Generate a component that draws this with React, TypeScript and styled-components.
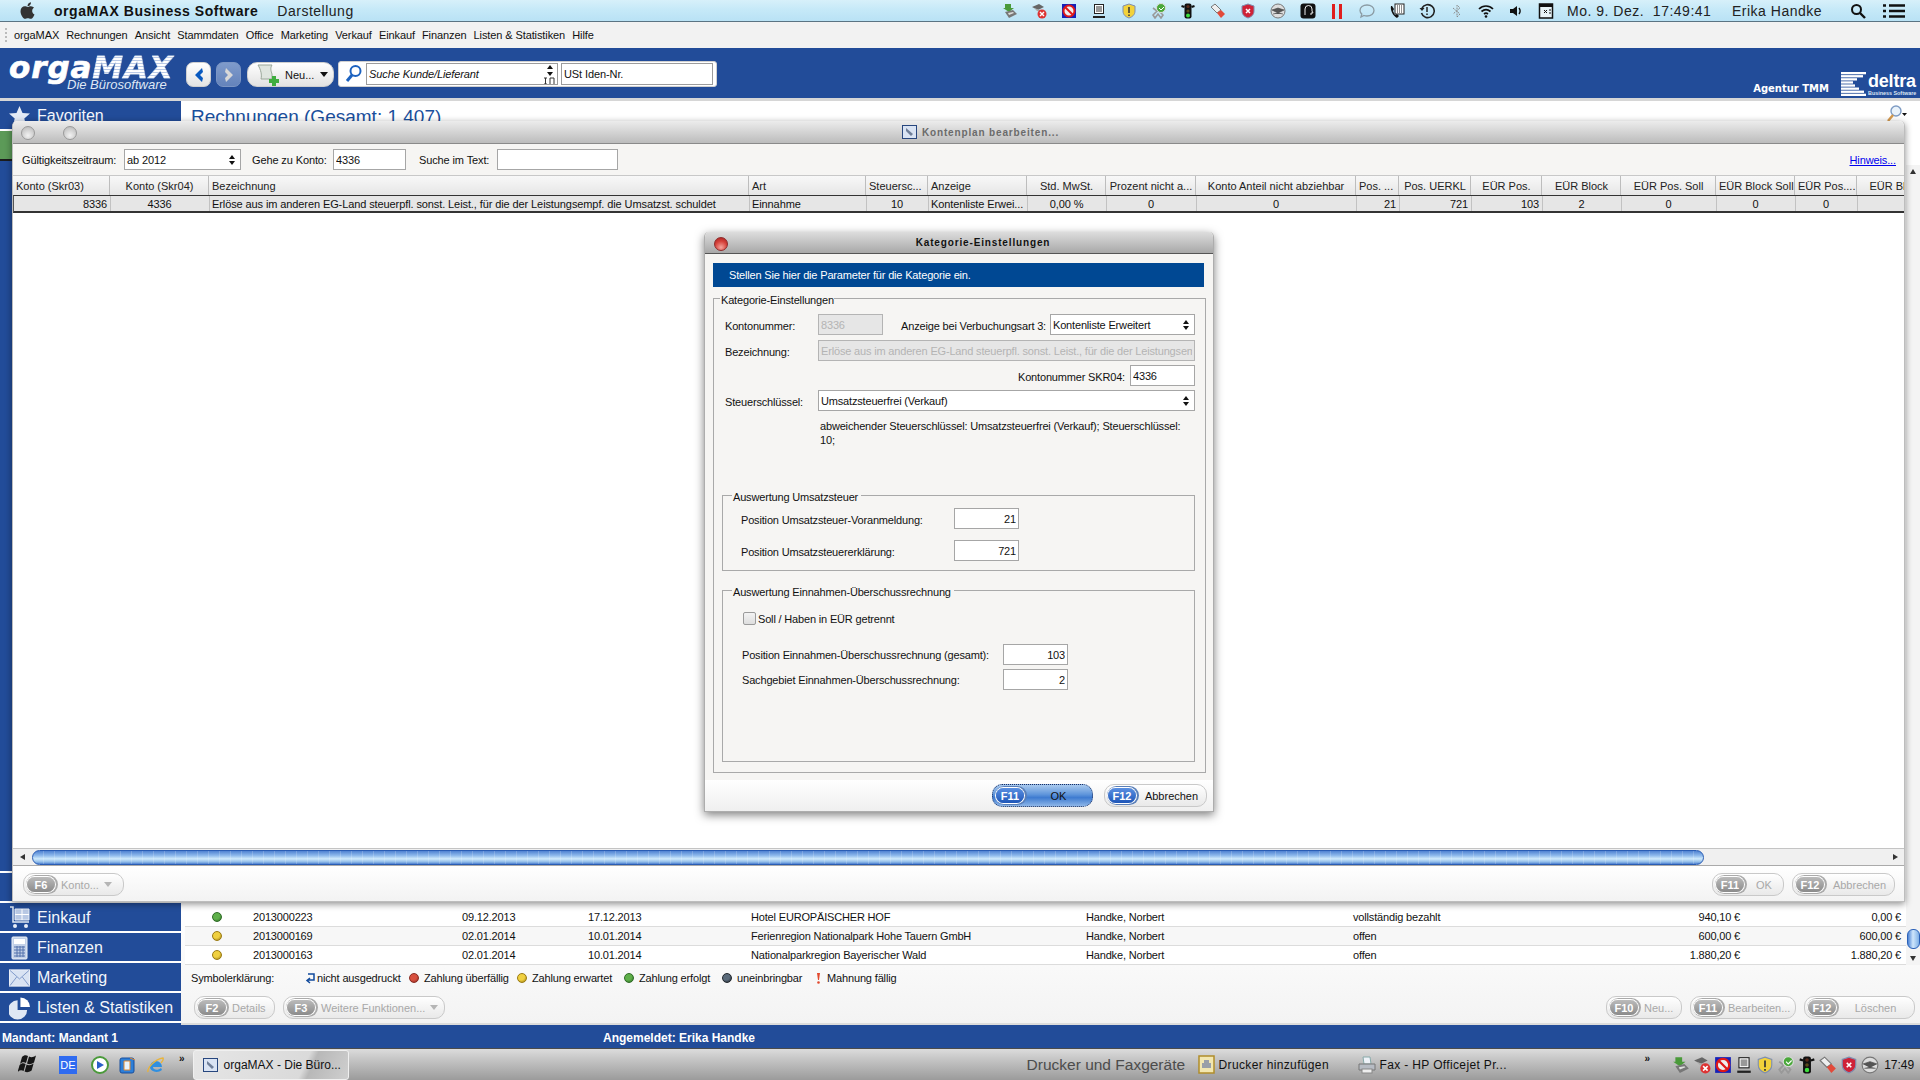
import React from "react";
import styled, { createGlobalStyle } from "styled-components";
import { FaApple } from "react-icons/fa";

const UI = `"Liberation Sans", Arial, sans-serif`;
const BLUE = "#224c99";

const Global = createGlobalStyle`
  html, body { margin: 0; padding: 0; background: #fff; }
  #root { width: 1920px; height: 1080px; }
  * { box-sizing: border-box; }
`;

const Page = styled.div`
  position: relative;
  width: 1920px;
  height: 1080px;
  overflow: hidden;
  display: flex;
  flex-direction: column;
  font: 11px ${UI};
  color: #111;
`;

/* ---------- mac menu bar ---------- */
const MacBar = styled.div`
  height: 22px;
  flex: none;
  display: flex;
  align-items: center;
  padding: 0 4px 0 18px;
  background: linear-gradient(#d7f0fa, #c6e9f8 45%, #b9e2f5);
  border-bottom: 1px solid #5b7483;
  color: #222;
  font: 14px ${UI};
  letter-spacing: 0.5px;
  white-space: nowrap;
`;
const AppName = styled.span`
  margin-left: 17px;
  font-weight: 700;
  letter-spacing: 0.55px;
  color: #111;
`;
const MacMenu = styled.span`
  margin-left: 19px;
`;
const TrayRow = styled.div<{ $gap: number }>`
  display: flex;
  align-items: center;
  gap: ${(p) => p.$gap}px;
`;
const MacTray = styled(TrayRow)`
  margin-left: auto;
`;
const MacClock = styled.span`
  margin-left: 13px;
  width: 165px;
  white-space: pre;
`;
const MacUser = styled.span`
  width: 118px;
`;
const MacTool = styled.span`
  width: 33px;
  display: flex;
  align-items: center;
`;

/* ---------- application menu ---------- */
const AppMenu = styled.div`
  height: 26px;
  flex: none;
  display: flex;
  align-items: center;
  gap: 7.1px;
  padding-left: 14px;
  background: #f2f2f2;
  position: relative;
  letter-spacing: -0.1px;
  &::before {
    content: "";
    position: absolute;
    left: 5px;
    top: 6px;
    bottom: 6px;
    border-left: 2px dotted #bbb;
  }
`;
const MenuItem = styled.span`
  white-space: nowrap;
`;

/* ---------- blue header ---------- */
const Header = styled.div`
  height: 50px;
  flex: none;
  display: flex;
  background: ${BLUE};
  padding-left: 9px;
  color: #fff;
`;
const Logo = styled.div`
  width: 177px;
  padding-top: 7px;
  flex: none;
`;
const LogoWord = styled.div`
  font: italic 700 31px/24px "DejaVu Sans", sans-serif;
  letter-spacing: 0.9px;
  -webkit-text-stroke: 0.7px #fff;
  white-space: nowrap;
  color: #fff;
`;
const LogoMax = styled.span`
  background: repeating-linear-gradient(#fff 0 2px, #b9c9e6 2px 3px);
  -webkit-background-clip: text;
  background-clip: text;
  color: transparent;
  -webkit-text-stroke: 0.3px #dfe7f5;
`;
const LogoSub = styled.div`
  font: italic 13px/12px ${UI};
  color: #dfe7f5;
  margin-left: 58px;
`;
const NavButton = styled.div<{ $dim?: boolean }>`
  width: 25px;
  height: 25px;
  margin-top: 14px;
  margin-right: 5px;
  flex: none;
  border-radius: 7px;
  display: flex;
  align-items: center;
  justify-content: center;
  background: ${(p) =>
    p.$dim ? "linear-gradient(#7f9bcb,#6483bb)" : "linear-gradient(#fff,#e4e4e4)"};
  border: 1px solid ${(p) => (p.$dim ? "#7b95c4" : "#d0d0d0")};
`;
const NewButton = styled.div`
  width: 87px;
  height: 25px;
  margin: 14px 4px 0 1px;
  flex: none;
  display: flex;
  align-items: center;
  border-radius: 10px;
  background: linear-gradient(#fff, #e2e2e2);
  border: 1px solid #cfcfcf;
  color: #111;
  padding-left: 5px;
`;
const NewLabel = styled.span`
  margin-left: 6px;
  margin-right: 6px;
`;
const Caret = styled.span<{ $color?: string }>`
  width: 0;
  height: 0;
  flex: none;
  border-left: 4px solid transparent;
  border-right: 4px solid transparent;
  border-top: 5px solid ${(p) => p.$color ?? "#111"};
`;
const SearchBox = styled.div`
  width: 379px;
  height: 26px;
  margin-top: 13px;
  flex: none;
  display: flex;
  align-items: center;
  gap: 3px;
  background: #fff;
  border: 1px solid #d0d0d0;
  border-radius: 3px;
  padding-left: 6px;
  color: #111;
`;
const SearchField = styled.div<{ $w: number; $italic?: boolean }>`
  width: ${(p) => p.$w}px;
  height: 22px;
  flex: none;
  border: 1px solid #9c9c9c;
  display: flex;
  align-items: center;
  justify-content: space-between;
  padding: 0 0 0 2px;
  font-style: ${(p) => (p.$italic ? "italic" : "normal")};
  letter-spacing: -0.1px;
  white-space: nowrap;
`;
const HeaderRight = styled.div`
  margin-left: auto;
  display: flex;
  align-items: flex-end;
  padding-right: 4px;
  padding-bottom: 1px;
`;
const Agentur = styled.span`
  font: 700 10px/14px "DejaVu Sans", sans-serif;
  margin-right: 12px;
  margin-bottom: 1px;
`;
const DeltraText = styled.div`
  margin-left: 2px;
  width: 48px;
`;
const DeltraWord = styled.div`
  font: 700 18px/18px ${UI};
  letter-spacing: -0.2px;
`;
const DeltraSub = styled.div`
  font: 700 5.4px/7px ${UI};
  white-space: nowrap;
  color: #dde5f3;
`;
const GrayRule = styled.div`
  height: 3px;
  flex: none;
  background: #d6d6d6;
`;

/* ---------- body ---------- */
const Body = styled.div`
  flex: 1;
  min-height: 0;
  display: flex;
`;
const Sidebar = styled.div`
  width: 181px;
  flex: none;
  display: flex;
  flex-direction: column;
  background: ${BLUE};
  color: #f4f7fc;
  padding-bottom: 2px;
`;
const SideItem = styled.div<{ $active?: boolean }>`
  height: 30px;
  flex: none;
  display: flex;
  align-items: center;
  gap: 7px;
  padding: 2px 0 0 9px;
  font-size: 16px;
  white-space: nowrap;
  background: ${(p) => (p.$active ? "#5c9a58" : "transparent")};
  border-bottom: 2px solid ${(p) => (p.$active ? "#1c1c1c" : "#fff")};
`;
const SideSpacer = styled.div`
  flex: 1;
`;
const Main = styled.div`
  flex: 1;
  min-width: 0;
  display: flex;
  flex-direction: column;
  background: linear-gradient(#fff 88%, #f3f3f3);
  border-bottom: 2px solid #dcdcdc;
`;
const MainTop = styled.div`
  flex: 1;
  min-height: 0;
  display: flex;
`;
const MainColumn = styled.div`
  flex: 1;
  min-width: 0;
  display: flex;
  flex-direction: column;
  padding-left: 4px;
`;
const TitleRow = styled.div`
  display: flex;
  justify-content: space-between;
  padding: 4px 0 0 6px;
  margin-right: -3px;
`;
const Title = styled.div`
  font-size: 19px;
  line-height: 24px;
  color: #1a4f9c;
`;
const ListGrid = styled.div`
  margin-top: auto;
`;
const ListRow = styled.div<{ $alt?: boolean }>`
  height: 19px;
  display: grid;
  grid-template-columns: 68px 209px 126px 163px 335px 267px 387px 165px;
  align-items: center;
  letter-spacing: -0.17px;
  background: ${(p) => (p.$alt ? "#f7f7f7" : "#fff")};
  border-bottom: 1px solid #dcdcdc;
`;
const ListCell = styled.span<{ $right?: boolean; $end?: boolean }>`
  white-space: nowrap;
  text-align: ${(p) => (p.$right ? "right" : "left")};
  padding-right: ${(p) => (p.$end ? 4 : 0)}px;
`;
const SplitCell = styled.span`
  display: flex;
  justify-content: space-between;
  white-space: nowrap;
`;
const DotCell = styled.span`
  padding-left: 27px;
  display: flex;
  align-items: center;
`;
const Dot = styled.span<{ $c: string; $d: string }>`
  display: inline-block;
  width: 10px;
  height: 10px;
  flex: none;
  border-radius: 50%;
  background: radial-gradient(circle at 40% 35%, ${(p) => p.$c} 45%, ${(p) => p.$d});
  border: 1px solid ${(p) => p.$d};
`;
const VScroll = styled.div`
  width: 14px;
  flex: none;
  margin: 64px 0 0;
  display: flex;
  flex-direction: column;
  background: #f4f4f4;
  align-items: center;
`;
const VArrow = styled.span<{ $up?: boolean }>`
  margin: 4px 0;
  width: 0;
  height: 0;
  border-left: 3px solid transparent;
  border-right: 3px solid transparent;
  ${(p) => (p.$up ? "border-bottom: 5px solid #333;" : "border-top: 5px solid #333;")}
`;
const VThumb = styled.div`
  margin-top: auto;
  margin-bottom: 3px;
  width: 13px;
  height: 20px;
  border-radius: 6px;
  border: 1px solid #2b61b8;
  background: linear-gradient(90deg, #4b82d4, #cfe6fb 45%, #7fb0e6);
`;
const LegendRow = styled.div`
  height: 25px;
  flex: none;
  display: flex;
  align-items: center;
  padding: 1px 0 0 10px;
  letter-spacing: -0.15px;
`;
const LegendHead = styled.span`
  width: 114px;
  white-space: nowrap;
`;
const LegendItem = styled.span<{ $w: number; $gap?: number }>`
  width: ${(p) => p.$w}px;
  flex: none;
  display: flex;
  align-items: center;
  gap: ${(p) => p.$gap ?? 5}px;
  white-space: nowrap;
`;
const ActionRow = styled.div`
  height: 33px;
  flex: none;
  display: flex;
  justify-content: space-between;
  padding: 6px 5px 0 13px;
`;
const ButtonGroup = styled.div`
  display: flex;
  gap: 8px;
`;

/* ---------- pill buttons ---------- */
const Pill = styled.div<{ $w: number; $primary?: boolean; $on?: boolean }>`
  width: ${(p) => p.$w}px;
  height: 23px;
  flex: none;
  display: flex;
  align-items: center;
  padding: 0 5px 0 3px;
  border-radius: 10px;
  white-space: nowrap;
  letter-spacing: 0;
  color: ${(p) => (p.$on || p.$primary ? "#111" : "#a8a8a8")};
  border: 1px ${(p) => (p.$primary ? "dotted #1c2f60" : "solid #c9c9c9")};
  background: ${(p) =>
    p.$primary
      ? "linear-gradient(#a9c9ee, #5f95db 45%, #3e7bd0 60%, #8db6e8)"
      : "linear-gradient(#fff, #f1f1f1 60%, #e9e9e9)"};
`;
const KeyBadge = styled.span<{ $on?: boolean }>`
  flex: none;
  min-width: 28px;
  height: 15px;
  padding: 0 3px;
  display: flex;
  align-items: center;
  justify-content: center;
  border-radius: 8px;
  font-weight: 700;
  font-size: 11px;
  color: #fff;
  background: ${(p) =>
    p.$on ? "linear-gradient(#5b90e2,#1e56b8)" : "linear-gradient(#bbb,#8b8b8b)"};
  box-shadow: 0 0 0 1px #fff, 1px 0 0 2px ${(p) => (p.$on ? "#5a7fb8" : "#aaa")};
`;
const PillLabel = styled.span<{ $center?: boolean }>`
  flex: 1;
  margin-left: 6px;
  display: flex;
  align-items: center;
  justify-content: ${(p) => (p.$center ? "center" : "flex-start")};
  gap: 5px;
`;

/* ---------- windows ---------- */
const ListWindow = styled.div`
  position: absolute;
  left: 12px;
  top: 121px;
  width: 1893px;
  height: 781px;
  display: flex;
  flex-direction: column;
  background: #fff;
  border: 1px solid #bdbdbd;
  border-top: 0;
  border-radius: 5px 5px 0 0;
  box-shadow: 0 2px 7px rgba(0, 0, 0, 0.45);
`;
const WinTitle = styled.div<{ $offset: number }>`
  height: 23px;
  flex: none;
  position: relative;
  display: flex;
  align-items: center;
  justify-content: center;
  gap: 5px;
  padding-left: ${(p) => p.$offset}px;
  border-radius: 5px 5px 0 0;
  background: linear-gradient(#ececec, #bcbcbc);
  border-bottom: 1px solid #8a8a8a;
  font: 700 10px ${UI};
  letter-spacing: 0.85px;
  color: #6b6b6b;
`;
const Lights = styled.div`
  position: absolute;
  left: 8px;
  top: 5px;
  display: flex;
  gap: 28px;
`;
const GreyLight = styled.span`
  width: 14px;
  height: 14px;
  border-radius: 50%;
  border: 1px solid #9a9a9a;
  background: radial-gradient(circle at 50% 70%, #f2f2f2, #b4b4b4);
`;
const Toolbar = styled.div`
  height: 31px;
  flex: none;
  display: flex;
  align-items: center;
  padding: 0 8px 0 9px;
  background: #f6f5f3;
  letter-spacing: -0.12px;
`;
const ToolLabel = styled.span<{ $w: number; $ml?: number }>`
  width: ${(p) => p.$w}px;
  margin-left: ${(p) => p.$ml ?? 0}px;
  flex: none;
  white-space: nowrap;
`;
const Field = styled.input<{ $w: number; $right?: boolean; $off?: boolean; $ml?: number }>`
  width: ${(p) => p.$w}px;
  height: 21px;
  flex: none;
  padding: 0 2px;
  margin: 0 0 0 ${(p) => p.$ml ?? 0}px;
  outline: none;
  font: 11px ${UI};
  letter-spacing: inherit;
  border: 1px solid ${(p) => (p.$off ? "#b4b4b4" : "#a6a6a6")};
  border-radius: 0;
  text-align: ${(p) => (p.$right ? "right" : "left")};
  color: ${(p) => (p.$off ? "#b4b4b4" : "#111")};
  background: ${(p) => (p.$off ? "#e6e6e6" : "#fff")};
`;
const Combo = styled.div<{ $w: number; $ml?: number }>`
  width: ${(p) => p.$w}px;
  height: 21px;
  margin-left: ${(p) => p.$ml ?? 0}px;
  flex: none;
  display: flex;
  align-items: center;
  justify-content: space-between;
  padding: 0 5px 0 2px;
  background: #fff;
  border: 1px solid #a6a6a6;
  white-space: nowrap;
`;
const Updown = styled.span`
  display: flex;
  flex-direction: column;
  gap: 2px;
  flex: none;
  &::before,
  &::after {
    content: "";
    width: 0;
    height: 0;
    border-left: 3px solid transparent;
    border-right: 3px solid transparent;
  }
  &::before {
    border-bottom: 4px solid #111;
  }
  &::after {
    border-top: 4px solid #111;
  }
`;
const HintLink = styled.a`
  margin-left: auto;
  color: #0000ee;
  text-decoration: underline;
`;
const Columns = `97px 99px 540px 117px 62px 99px 79px 90px 160px 43px 72px 71px 79px 95px 79px 62px 78px`;
const TableArea = styled.div`
  flex: 1;
  min-height: 0;
  overflow: hidden;
  background: #fff;
`;
const HeadRow = styled.div`
  height: 20px;
  display: grid;
  grid-template-columns: ${Columns};
  background: linear-gradient(#f8f8f8, #e6e6e6);
  border-top: 1px solid #c8c8c8;
`;
const HeadCell = styled.div<{ $a?: string }>`
  padding: 0 2px 0 3px;
  line-height: 20px;
  white-space: nowrap;
  overflow: hidden;
  text-align: ${(p) => p.$a ?? "center"};
  border-right: 1px solid #bdbdbd;
  color: #222;
`;
const DataRow = styled.div`
  height: 18px;
  display: grid;
  grid-template-columns: ${Columns};
  background: #e6e6e6;
  border-top: 1px solid #333;
  border-bottom: 2px solid #333;
  border-left: 1px solid #555;
`;
const DataCell = styled.div<{ $a?: string }>`
  padding: 0 3px 0 2px;
  line-height: 16px;
  letter-spacing: -0.1px;
  white-space: nowrap;
  overflow: hidden;
  text-align: ${(p) => p.$a ?? "center"};
  border-right: 1px solid #c2c2c2;
`;
const HScroll = styled.div`
  height: 18px;
  flex: none;
  display: flex;
  align-items: center;
  padding: 0 1px;
  background: #f0f0f0;
  border-top: 1px solid #c4c4c4;
  border-bottom: 1px solid #aaa;
`;
const HBtn = styled.span`
  width: 16px;
  height: 16px;
  flex: none;
  display: flex;
  align-items: center;
  justify-content: center;
`;
const Tri = styled.span<{ $right?: boolean }>`
  width: 0;
  height: 0;
  border-top: 3px solid transparent;
  border-bottom: 3px solid transparent;
  ${(p) => (p.$right ? "border-left: 5px solid #333;" : "border-right: 5px solid #333;")}
`;
const HThumb = styled.div`
  width: 1672px;
  height: 15px;
  margin-left: 2px;
  border: 1px solid #2a5db4;
  border-radius: 8px;
  background: repeating-linear-gradient(90deg, transparent 0 10px, rgba(255, 255, 255, 0.18) 10px 11px),
    linear-gradient(#4f82d2, #8fbaec 35%, #cfeafc 60%, #8fbbe9 85%, #4a7dcf);
`;
const HSpacer = styled.div`
  flex: 1;
`;
const WinFooter = styled.div`
  height: 35px;
  flex: none;
  display: flex;
  align-items: flex-start;
  justify-content: space-between;
  padding: 7px 9px 0 10px;
  background: linear-gradient(#fff, #f3f3f3);
`;

/* ---------- dialog ---------- */
const Dialog = styled.div`
  position: absolute;
  left: 704px;
  top: 232px;
  width: 510px;
  height: 580px;
  display: flex;
  flex-direction: column;
  background: #f6f5f3;
  border: 1px solid #adadad;
  border-top: 0;
  border-radius: 5px 5px 0 0;
  box-shadow: 0 3px 10px rgba(0, 0, 0, 0.5);
  letter-spacing: -0.17px;
`;
const DialogTitle = styled(WinTitle)`
  height: 22px;
  background: linear-gradient(#dddddd, #a8a8a8);
  border-bottom: 1px solid #555;
  color: #111;
`;
const CloseLight = styled.span`
  position: absolute;
  left: 9px;
  top: 5px;
  width: 14px;
  height: 14px;
  border-radius: 50%;
  border: 1px solid #8e2a2a;
  background: radial-gradient(circle at 50% 78%, #f5a49c, #d5413a 55%, #a51e1e);
`;
const Banner = styled.div`
  height: 24px;
  flex: none;
  margin: 9px 9px 0 8px;
  padding-left: 16px;
  background: #004893;
  color: #fff;
  line-height: 24px;
`;
const Group = styled.fieldset`
  margin: 4px 7px 0 8px;
  padding: 0;
  min-width: 0;
  height: 482px;
  border: 1px solid #a9a9a9;
  border-radius: 0;
  display: block;
`;
const SubGroup = styled.fieldset<{ $h: number; $mt: number }>`
  margin: ${(p) => p.$mt}px 10px 0 8px;
  padding: 0;
  min-width: 0;
  height: ${(p) => p.$h}px;
  border: 1px solid #a9a9a9;
`;
const Legend = styled.legend<{ $ml: number }>`
  margin-left: ${(p) => p.$ml}px;
  padding: 0 0 0 1px;
  line-height: 14px;
  font-size: 11px;
  transform: translateY(2px);
`;
const SubLegend = styled(Legend)`
  padding: 0 3px 0 1px;
`;
const FormRow = styled.div<{ $mt: number; $pl?: number }>`
  display: flex;
  align-items: center;
  margin-top: ${(p) => p.$mt}px;
  padding-left: ${(p) => p.$pl ?? 11}px;
  padding-right: 10px;
  white-space: nowrap;
`;
const FormLabel = styled.span<{ $w: number; $right?: boolean; $pt?: number }>`
  width: ${(p) => p.$w}px;
  padding-top: ${(p) => p.$pt ?? 2}px;
  flex: none;
  text-align: ${(p) => (p.$right ? "right" : "left")};
`;
const NoteText = styled.div`
  margin: 8px 0 0 106px;
  height: 28px;
  line-height: 14px;
  white-space: nowrap;
`;
const CheckBox = styled.span`
  width: 13px;
  height: 13px;
  flex: none;
  margin-right: 2px;
  border: 1px solid #9b9b9b;
  border-radius: 2px;
  background: linear-gradient(#f3f3f3, #dedede);
`;
const DialogFooter = styled.div`
  margin-top: 7px;
  flex: 1;
  display: flex;
  justify-content: flex-end;
  gap: 11px;
  padding: 4px 6px 0 0;
  background: linear-gradient(#fff, #efefef);
`;

/* ---------- status + taskbar ---------- */
const StatusBar = styled.div`
  height: 23px;
  flex: none;
  display: flex;
  align-items: center;
  padding: 3px 0 0 2px;
  background: ${BLUE};
  color: #fff;
  font-weight: 700;
  font-size: 12px;
`;
const StatusLeft = styled.span`
  width: 601px;
`;
const Taskbar = styled.div`
  height: 32px;
  flex: none;
  display: flex;
  align-items: center;
  padding-left: 18px;
  background: linear-gradient(#dcdcdc, #c4c4c4 35%, #9b9b9b);
  border-top: 1px solid #4b4b4b;
  font-size: 12px;
  color: #111;
`;
const DeBox = styled.span`
  width: 18px;
  height: 18px;
  margin-left: 20px;
  flex: none;
  background: #2f6bf0;
  color: #fff;
  font-size: 11px;
  display: flex;
  align-items: center;
  justify-content: center;
`;
const QuickIcons = styled.div`
  margin-left: 14px;
  display: flex;
  gap: 10px;
`;
const Chevrons = styled.span<{ $ml: number }>`
  margin-left: ${(p) => p.$ml}px;
  margin-bottom: 12px;
  font-weight: 700;
  font-size: 10px;
`;
const TaskButton = styled.div`
  width: 156px;
  height: 30px;
  margin-left: 8px;
  flex: none;
  display: flex;
  align-items: center;
  gap: 6px;
  padding-left: 9px;
  background: linear-gradient(115deg, #e6e6e6, #dadada 70%, #b8b8b8 75%, #cfcfcf);
  border: 1px solid #f0f0f0;
  border-radius: 3px;
  white-space: nowrap;
`;
const TaskGroup = styled.span`
  margin-left: 678px;
  font-size: 15.5px;
  color: #4c4c4c;
  width: 171px;
  flex: none;
  white-space: nowrap;
`;
const TaskLink = styled.span<{ $w: number }>`
  display: flex;
  align-items: center;
  gap: 4px;
  width: ${(p) => p.$w}px;
  flex: none;
  white-space: nowrap;
  letter-spacing: 0.35px;
`;
const TaskClock = styled.span`
  margin-left: 5px;
`;
const TaskTray = styled(TrayRow)`
  margin-left: 22px;
`;

/* ---------- drawings ---------- */
type Kind =
  | "transfer" | "disk" | "noentry" | "monitor" | "shieldY" | "ribbon" | "traffic" | "eraser"
  | "shieldR" | "globe" | "head" | "pause" | "bubble" | "phone" | "clock" | "bt" | "wifi" | "vol" | "cal";

const Glyph = ({ kind, size = 16 }: { kind: Kind; size?: number }) => {
  const body: Record<Kind, React.ReactNode> = {
    transfer: (<><path d="M3 1h6v4h3L7 9 1 5h2z" fill="#4a9a3a" /><path d="M3 9l8-2 4 4-8 4z" fill="#777" /><path d="M6 10l5-1 1 1-5 2z" fill="#ddd" /></>),
    disk: (<><path d="M1 4l7-3 5 3-6 3z" fill="#666" /><path d="M3 5l6 2 2 2-5-1z" fill="#aaa" /><circle cx="11" cy="11" r="4.5" fill="#d33" /><path d="M9 9l4 4M13 9l-4 4" stroke="#fff" strokeWidth="1.4" /></>),
    noentry: (<><rect x="1" y="1" width="14" height="14" fill="#1521b8" /><circle cx="8" cy="8" r="5.5" fill="#eee" stroke="#e01818" strokeWidth="2" /><path d="M4 4l8 8" stroke="#e01818" strokeWidth="2" /></>),
    monitor: (<><rect x="3.5" y="1.5" width="9" height="9" fill="#fff" stroke="#222" /><rect x="5" y="3" width="6" height="6" fill="#999" /><path d="M2 14h12" stroke="#222" strokeWidth="2" /></>),
    shieldY: (<><path d="M8 1l6 2v5c0 4-3 6-6 7-3-1-6-3-6-7V3z" fill="#f2d23a" stroke="#7f8fb0" /><path d="M8 4v6M8 11.5v1.5" stroke="#333" strokeWidth="1.5" /></>),
    ribbon: (<><path d="M2 5l4 3-4 4 2 3 3-4 3 4 2-3-4-4" fill="none" stroke="#999" strokeWidth="1.6" /><circle cx="10" cy="5" r="4.5" fill="#4aa83a" stroke="#ddd" /><path d="M8 5l2 2 3-3" stroke="#fff" fill="none" /></>),
    traffic: (<><rect x="4.5" y="0.5" width="7" height="15" rx="2" fill="#111" /><path d="M1.5 3l3 1M14.5 3l-3 1" stroke="#111" strokeWidth="2" /><circle cx="8" cy="3.5" r="1.6" fill="#5a2a1a" /><circle cx="8" cy="8" r="1.6" fill="#5a4a1a" /><circle cx="8" cy="12.5" r="2" fill="#3de03d" /></>),
    eraser: (<><path d="M1 4l4-3 6 6-4 3z" fill="#eee" stroke="#777" /><path d="M7 10l4-3 4 4-4 4z" fill="#e24a3a" /></>),
    shieldR: (<><path d="M8 1l6 2v5c0 4-3 6-6 7-3-1-6-3-6-7V3z" fill="#cf2237" stroke="#7f8fb0" /><path d="M6 6l4 4M10 6l-4 4" stroke="#fff" strokeWidth="1.5" /></>),
    globe: (<><circle cx="8" cy="8" r="7" fill="#ddd" stroke="#777" /><path d="M2 7l6-2 6 2-6 3zM3 11l5-1 5 1" fill="#555" stroke="#444" strokeWidth=".6" /></>),
    head: (<><rect x="0.5" y="0.5" width="15" height="15" rx="3" fill="#111" /><path d="M5 12V6a3.5 3.5 0 017 0v2l1 2h-2v2" fill="none" stroke="#eee" /></>),
    pause: (<><rect x="3" y="1" width="3" height="15" fill="#e01d1d" /><rect x="10" y="1" width="3" height="15" fill="#e01d1d" /></>),
    bubble: <path d="M8 2c4 0 7 2.4 7 5.5S12 13 8 13c-1 0-2-.2-3-.5L2 14l.8-3C1.700 10 1 9 1 7.500 1 4.400 4 2 8 2z" fill="none" stroke="#8b9ba3" strokeWidth="1.3" />,
    phone: (<><path d="M2 3c-1 4 2 10 6 12l2-2-2-2-2 1-2-4 1-2-2-3z" fill="#111" /><rect x="6" y="1" width="9" height="10" fill="#fff" stroke="#222" /><path d="M8 3h5M8 5h5M8 7h5M8 9h5" stroke="#222" strokeDasharray="1 1" /></>),
    clock: (<><path d="M3 5a6.500 6.500 0 11-.5 5" fill="none" stroke="#222" strokeWidth="1.6" /><path d="M0.500 5h5L3 8z" fill="#222" /><path d="M8 4v5M8 10.500v1.500" stroke="#222" strokeWidth="1.5" /></>),
    bt: <path d="M4 5l7 6-3 3V2l3 3-7 6" fill="none" stroke="#8c8c8c" strokeDasharray="2 1" />,
    wifi: (<><path d="M1 6c4-4 10-4 14 0M3.500 8.500c3-2.500 6-2.500 9 0M6 11c1.300-1 2.700-1 4 0" fill="none" stroke="#111" strokeWidth="1.7" /><circle cx="8" cy="13.500" r="1.300" fill="#111" /></>),
    vol: (<><path d="M2 6h3l4-3v10l-4-3H2z" fill="#111" /><path d="M11 5c1.500 2 1.500 4 0 6" fill="none" stroke="#111" strokeWidth="1.4" /></>),
    cal: (<><rect x="1.500" y="1" width="13" height="14" fill="#e8f4f8" stroke="#111" strokeWidth="1.5" /><rect x="1.500" y="1" width="13" height="3" fill="#111" /><path d="M6 7l3 3M9 7l-3 3M11 7h2M11 10h2" stroke="#111" /></>),
  };
  return <svg width={size} height={size} viewBox="0 0 16 16">{body[kind]}</svg>;
};

const SvgSearch = ({ c = "#111", s = 16 }: { c?: string; s?: number }) => (
  <svg width={s} height={s} viewBox="0 0 16 16"><circle cx="6.500" cy="6.500" r="4.500" fill="none" stroke={c} strokeWidth="2" /><path d="M10 10l5 5" stroke={c} strokeWidth="2.400" /></svg>
);
const SvgList = () => (
  <svg width="22" height="14" viewBox="0 0 22 14"><path d="M0 1.500h3M6 1.500h16M0 7h3M6 7h16M0 12.500h3M6 12.500h16" stroke="#111" strokeWidth="2.500" /></svg>
);
const Chevron = ({ right }: { right?: boolean }) => (
  <svg width="12" height="16" viewBox="0 0 12 16"><path d={right ? "M3 1l7 7-7 7-1-4 3-3-3-3z" : "M9 1L2 8l7 7 1-4-3-3 3-3z"} fill={right ? "#d8d8d8" : "#0a5ac0"} /></svg>
);
const NewDoc = () => (
  <svg width="26" height="22" viewBox="0 0 26 22"><path d="M5 1h14c-2 3-1 6 0 9v5H8c1-4 0-9-3-14z" fill="#dfe5df" stroke="#9aa79a" /><path d="M19 12h4v3h3v4h-3v3h-4v-3h-3v-4h3z" fill="#3fae3f" /></svg>
);
const Magnifier = () => (
  <svg width="18" height="20" viewBox="0 0 18 20"><circle cx="10.500" cy="7" r="5" fill="#fff" stroke="#1c62c0" strokeWidth="2" /><path d="M7 11l-5 6" stroke="#1c62c0" strokeWidth="3" /></svg>
);
const SpinCursor = () => (
  <svg width="14" height="20" viewBox="0 0 14 20"><path d="M7 1l3 4H4zM7 12l3-4H4z" fill="#111" /><path d="M1 14h3M1 20h3M2.500 14v6M7 14v6M7 14h4v6" fill="none" stroke="#333" /></svg>
);
const SmallMag = () => (
  <svg width="24" height="16" viewBox="0 0 24 16"><circle cx="11" cy="6" r="5" fill="#eaf3fb" stroke="#7e9cc4" strokeWidth="1.400" /><path d="M8 10l-5 6" stroke="#d59a4e" strokeWidth="2.500" /><path d="M17 8h5l-2.500 3z" fill="#111" /></svg>
);
const DeltraMark = () => (
  <svg width="25" height="25" viewBox="0 0 25 25">
    {[0, 1, 2, 3, 4, 5, 6, 7].map((i) => (
      <rect key={i} x="0" y={i * 3.1} width={[25, 22, 16, 12, 14, 18, 23, 25][i]} height="2.300" fill="#fff" />
    ))}
  </svg>
);
const Star = () => (
  <svg width="21" height="20" viewBox="0 0 21 20"><path d="M10.500 0l3 7 7.500.6-5.700 4.900 1.800 7.500-6.600-4-6.600 4 1.800-7.500L0 7.600 7.500 7z" fill="#e4ebf6" /></svg>
);
const Cart = () => (
  <svg width="21" height="24" viewBox="0 0 21 24"><path d="M1 1h3v15h16" fill="none" stroke="#dfe7f4" strokeWidth="1.500" /><path d="M6 3h14v11H6z" fill="#b8c8e4" stroke="#e8eef8" /><path d="M13 3v11M6 8.500h14" stroke="#fff" /><circle cx="6" cy="20" r="2" fill="#e8eef8" /><circle cx="17" cy="20" r="2" fill="#e8eef8" /></svg>
);
const Calc = () => (
  <svg width="21" height="24" viewBox="0 0 21 24"><rect x="3" y="1" width="15" height="22" rx="1" fill="#c3d1e8" stroke="#eef2f9" /><rect x="5" y="3" width="11" height="5" fill="#fff" /><path d="M5 11h11M5 14h11M5 17h11M5 20h11M8 10v11M11 10v11M14 10v11" stroke="#5572ad" /></svg>
);
const Envelope = () => (
  <svg width="21" height="18" viewBox="0 0 22 18"><rect x="0.500" y="0.500" width="21" height="17" fill="#d9e3f3" stroke="#eef2f9" /><path d="M1 1l10 9L21 1M1 17l7-9M21 17l-7-9" fill="none" stroke="#7d97c8" /></svg>
);
const PieIcon = () => (
  <svg width="21" height="24" viewBox="0 0 22 24"><path d="M9 4a10 10 0 1010 10H9z" fill="#dfe7f4" /><path d="M12 1a10 10 0 0110 10H12z" fill="#fff" /></svg>
);
const ReturnIcon = () => (
  <svg width="10" height="11" viewBox="0 0 10 11"><path d="M3 1h6v6H3M5 5L2 7.500 5 10" fill="none" stroke="#114a9c" strokeWidth="1.500" /></svg>
);
const Bang = () => (
  <svg width="7" height="11" viewBox="0 0 7 11"><path d="M2 0h3L4 7H3z" fill="#e2492e" /><circle cx="3.500" cy="9.500" r="1.300" fill="#e2492e" /></svg>
);
const WinDoc = () => (
  <svg width="15" height="14" viewBox="0 0 15 14"><rect x="0.500" y="0.500" width="14" height="13" fill="#d9e3f3" stroke="#27467e" /><path d="M4 3l7 6-2 2-5-5z" fill="#6f7f99" /></svg>
);
const Flag = () => (
  <svg width="21" height="21" viewBox="0 0 21 21"><path d="M4 3c2-2 4-2 6-1l-2 7c-2-1-4-1-6 1zM11 2.500c2 1 4 1 7-1l-2 7c-3 2-5 2-7 1zM1.600 11c2-2 4-2 6-1l-2 7c-2-1-4-1-6 1zM8.600 10.500c2 1 4 1 7-1l-2 7c-3 2-5 2-7 1z" fill="#161616" /></svg>
);
const MediaIcon = () => (
  <svg width="18" height="18" viewBox="0 0 18 18"><circle cx="9" cy="9" r="8" fill="#fff" stroke="#4a9a3a" strokeWidth="2" /><path d="M6 5l7 4-7 4z" fill="#2a5fc8" /></svg>
);
const MailIcon = () => (
  <svg width="18" height="18" viewBox="0 0 18 18"><rect x="1" y="2" width="14" height="15" rx="2" fill="#2d7fd8" stroke="#1a4f9c" /><path d="M5 5h6v9H5zM11 2l5 2" fill="#eaf3fb" stroke="#d83" /></svg>
);
const IeIcon = () => (
  <svg width="18" height="18" viewBox="0 0 18 18"><path d="M3 11a6 6 0 0112 0H6c0 3 5 4 8 1l1 2c-5 4-12 1-12-3z" fill="#2f8fe0" /><path d="M1 16C0 12 8 3 16 2c1 2-1 4-2 5" fill="none" stroke="#e9b43a" strokeWidth="1.400" /></svg>
);
const FolderDoc = () => (
  <svg width="17" height="19" viewBox="0 0 17 19"><rect x="1" y="1" width="15" height="17" fill="#f2e7b0" stroke="#b08d2a" strokeWidth="1.500" /><path d="M6 5h5v3h2v5H4V8h2z" fill="#9aa0a8" /></svg>
);
const Printer = () => (
  <svg width="18" height="18" viewBox="0 0 18 18"><path d="M5 1h7l1 7H6z" fill="#eef2f8" stroke="#8aa" /><path d="M1 8h16v6H1z" fill="#b7bcc4" stroke="#777" /><rect x="4" y="13" width="10" height="4" fill="#eee" stroke="#888" /></svg>
);

/* ---------- data ---------- */
const appMenu = ["orgaMAX", "Rechnungen", "Ansicht", "Stammdaten", "Office", "Marketing", "Verkauf", "Einkauf", "Finanzen", "Listen & Statistiken", "Hilfe"];
const macIcons: Kind[] = ["transfer", "disk", "noentry", "monitor", "shieldY", "ribbon", "traffic", "eraser", "shieldR", "globe", "head", "pause", "bubble", "phone", "clock", "bt", "wifi", "vol", "cal"];
const taskIcons: Kind[] = ["transfer", "disk", "noentry", "monitor", "shieldY", "ribbon", "traffic", "eraser", "shieldR", "globe"];
const headCols: [string, string?][] = [
  ["Konto (Skr03)", "left"], ["Konto (Skr04)"], ["Bezeichnung", "left"], ["Art", "left"], ["Steuersc...", "left"], ["Anzeige", "left"],
  ["Std. MwSt."], ["Prozent nicht a..."], ["Konto Anteil nicht abziehbar"], ["Pos. ...", "left"], ["Pos. UERKL"], ["EÜR Pos."], ["EÜR Block"],
  ["EÜR Pos. Soll"], ["EÜR Block Soll"], ["EÜR Pos...."], ["EÜR Block"],
];
const dataCols: [string, string?][] = [
  ["8336", "right"], ["4336"], ["Erlöse aus im anderen EG-Land steuerpfl. sonst. Leist., für die der Leistungsempf. die Umsatzst. schuldet", "left"],
  ["Einnahme", "left"], ["10"], ["Kontenliste Erwei...", "left"], ["0,00 %"], ["0"], ["0"], ["21", "right"], ["721", "right"], ["103", "right"],
  ["2"], ["0"], ["0"], ["0"], [""],
];
const GREEN: [string, string] = ["#5fb04a", "#2d6b25"];
const YELLOW: [string, string] = ["#f0d040", "#9a7a10"];
const rows = [
  { dot: GREEN, no: "2013000223", d1: "09.12.2013", d2: "17.12.2013", kunde: "Hotel EUROPÄISCHER HOF", st: "vollständig bezahlt", a: "940,10 €", b: "0,00 €" },
  { dot: YELLOW, no: "2013000169", d1: "02.01.2014", d2: "10.01.2014", kunde: "Ferienregion Nationalpark Hohe Tauern GmbH", st: "offen", a: "600,00 €", b: "600,00 €" },
  { dot: YELLOW, no: "2013000163", d1: "02.01.2014", d2: "10.01.2014", kunde: "Nationalparkregion Bayerischer Wald", st: "offen", a: "1.880,20 €", b: "1.880,20 €" },
];

const Btn = ({ k, label, w, on, primary, center, caret }: { k: string; label: string; w: number; on?: boolean; primary?: boolean; center?: boolean; caret?: boolean }) => (
  <Pill $w={w} $on={on} $primary={primary}>
    <KeyBadge $on={on || primary}>{k}</KeyBadge>
    <PillLabel $center={center}>
      {label}
      {caret && <Caret $color="#b5b5b5" />}
    </PillLabel>
  </Pill>
);

export default function App() {
  return (
    <Page>
      <Global />
      <MacBar>
        <FaApple size={19} color="#333" />
        <AppName>orgaMAX Business Software</AppName>
        <MacMenu>Darstellung</MacMenu>
        <MacTray $gap={13.8}>
          {macIcons.map((k) => <Glyph key={k} kind={k} />)}
        </MacTray>
        <MacClock>{"Mo. 9. Dez.  17:49:41"}</MacClock>
        <MacUser>Erika Handke</MacUser>
        <MacTool><SvgSearch /></MacTool>
        <MacTool><SvgList /></MacTool>
      </MacBar>
      <AppMenu>
        {appMenu.map((m) => <MenuItem key={m}>{m}</MenuItem>)}
      </AppMenu>
      <Header>
        <Logo>
          <LogoWord>orga<LogoMax>MAX</LogoMax></LogoWord>
          <LogoSub>Die Bürosoftware</LogoSub>
        </Logo>
        <NavButton><Chevron /></NavButton>
        <NavButton $dim><Chevron right /></NavButton>
        <NewButton>
          <NewDoc />
          <NewLabel>Neu...</NewLabel>
          <Caret />
        </NewButton>
        <SearchBox>
          <Magnifier />
          <SearchField $w={192} $italic>Suche Kunde/Lieferant<SpinCursor /></SearchField>
          <SearchField $w={152}>USt Iden-Nr.</SearchField>
        </SearchBox>
        <HeaderRight>
          <Agentur>Agentur TMM</Agentur>
          <DeltraMark />
          <DeltraText>
            <DeltraWord>deltra</DeltraWord>
            <DeltraSub>Business Software</DeltraSub>
          </DeltraText>
        </HeaderRight>
      </Header>
      <GrayRule />
      <Body>
        <Sidebar>
          <SideItem><Star />Favoriten</SideItem>
          <SideItem $active />
          <SideSpacer />
          <SideItem />
          <SideItem />
          <SideItem><Cart />Einkauf</SideItem>
          <SideItem><Calc />Finanzen</SideItem>
          <SideItem><Envelope />Marketing</SideItem>
          <SideItem><PieIcon />Listen &amp; Statistiken</SideItem>
        </Sidebar>
        <Main>
          <MainTop>
            <MainColumn>
              <TitleRow>
                <Title>Rechnungen (Gesamt: 1.407)</Title>
                <SmallMag />
              </TitleRow>
              <ListGrid>
                {rows.map((r, i) => (
                  <ListRow key={r.no} $alt={i === 1}>
                    <DotCell><Dot $c={r.dot[0]} $d={r.dot[1]} /></DotCell>
                    <ListCell>{r.no}</ListCell>
                    <ListCell>{r.d1}</ListCell>
                    <ListCell>{r.d2}</ListCell>
                    <ListCell>{r.kunde}</ListCell>
                    <ListCell>Handke, Norbert</ListCell>
                    <SplitCell>
                      <span>{r.st}</span>
                      <span>{r.a}</span>
                    </SplitCell>
                    <ListCell $right $end>{r.b}</ListCell>
                  </ListRow>
                ))}
              </ListGrid>
            </MainColumn>
            <VScroll>
              <VArrow $up />
              <VThumb />
              <VArrow />
            </VScroll>
          </MainTop>
          <LegendRow>
            <LegendHead>Symbolerklärung:</LegendHead>
            <LegendItem $w={104} $gap={2}><ReturnIcon />nicht ausgedruckt</LegendItem>
            <LegendItem $w={108}><Dot $c="#d8503f" $d="#8a2a20" />Zahlung überfällig</LegendItem>
            <LegendItem $w={107}><Dot $c={YELLOW[0]} $d={YELLOW[1]} />Zahlung erwartet</LegendItem>
            <LegendItem $w={98}><Dot $c={GREEN[0]} $d={GREEN[1]} />Zahlung erfolgt</LegendItem>
            <LegendItem $w={93}><Dot $c="#5a6a7a" $d="#20262c" />uneinbringbar</LegendItem>
            <LegendItem $w={90}><Bang />Mahnung fällig</LegendItem>
          </LegendRow>
          <ActionRow>
            <ButtonGroup>
              <Btn k="F2" label="Details" w={81} />
              <Btn k="F3" label="Weitere Funktionen..." w={162} caret />
            </ButtonGroup>
            <ButtonGroup>
              <Btn k="F10" label="Neu..." w={76} />
              <Btn k="F11" label="Bearbeiten..." w={106} />
              <Btn k="F12" label="Löschen" w={111} center />
            </ButtonGroup>
          </ActionRow>
        </Main>
      </Body>
      <StatusBar>
        <StatusLeft>Mandant: Mandant 1</StatusLeft>
        <span>Angemeldet: Erika Handke</span>
      </StatusBar>
      <Taskbar>
        <Flag />
        <DeBox>DE</DeBox>
        <QuickIcons>
          <MediaIcon />
          <MailIcon />
          <IeIcon />
        </QuickIcons>
        <Chevrons $ml={14}>»</Chevrons>
        <TaskButton><WinDoc />orgaMAX - Die Büro...</TaskButton>
        <TaskGroup>Drucker und Faxgeräte</TaskGroup>
        <TaskLink $w={160}><FolderDoc />Drucker hinzufügen</TaskLink>
        <TaskLink $w={287}><Printer />Fax - HP Officejet Pr...</TaskLink>
        <Chevrons $ml={0}>»</Chevrons>
        <TaskTray $gap={3}>
          {taskIcons.map((k) => <Glyph key={k} kind={k} size={18} />)}
        </TaskTray>
        <TaskClock>17:49</TaskClock>
      </Taskbar>

      <ListWindow>
        <WinTitle $offset={44}>
          <Lights><GreyLight /><GreyLight /></Lights>
          <WinDoc />
          Kontenplan bearbeiten...
        </WinTitle>
        <Toolbar>
          <ToolLabel $w={102}>Gültigkeitszeitraum:</ToolLabel>
          <Combo $w={117}>ab 2012<Updown /></Combo>
          <ToolLabel $w={81} $ml={11}>Gehe zu Konto:</ToolLabel>
          <Field $w={73} readOnly value="4336" />
          <ToolLabel $w={78} $ml={13}>Suche im Text:</ToolLabel>
          <Field $w={121} readOnly value="" />
          <HintLink>Hinweis...</HintLink>
        </Toolbar>
        <TableArea>
          <HeadRow>
            {headCols.map(([t, a], i) => <HeadCell key={i} $a={a}>{t}</HeadCell>)}
          </HeadRow>
          <DataRow>
            {dataCols.map(([t, a], i) => <DataCell key={i} $a={a}>{t}</DataCell>)}
          </DataRow>
        </TableArea>
        <HScroll>
          <HBtn><Tri /></HBtn>
          <HThumb />
          <HSpacer />
          <HBtn><Tri $right /></HBtn>
        </HScroll>
        <WinFooter>
          <Btn k="F6" label="Konto..." w={101} caret />
          <ButtonGroup>
            <Btn k="F11" label="OK" w={72} center />
            <Btn k="F12" label="Abbrechen" w={103} center />
          </ButtonGroup>
        </WinFooter>
      </ListWindow>

      <Dialog>
        <DialogTitle $offset={48}>
          <CloseLight />
          Kategorie-Einstellungen
        </DialogTitle>
        <Banner>Stellen Sie hier die Parameter für die Kategorie ein.</Banner>
        <Group>
          <Legend $ml={6}>Kategorie-Einstellungen</Legend>
          <FormRow $mt={9}>
            <FormLabel $w={93}>Kontonummer:</FormLabel>
            <Field $w={65} $off readOnly value="8336" />
            <FormLabel $w={163} $right>Anzeige bei Verbuchungsart 3:</FormLabel>
            <Combo $w={145} $ml={4}>Kontenliste Erweitert<Updown /></Combo>
          </FormRow>
          <FormRow $mt={5}>
            <FormLabel $w={93}>Bezeichnung:</FormLabel>
            <Field $w={377} $off readOnly value="Erlöse aus im anderen EG-Land steuerpfl. sonst. Leist., für die der Leistungsempf. die Umsatzst. schuldet" />
          </FormRow>
          <FormRow $mt={4}>
            <FormLabel $w={400} $right>Kontonummer SKR04:</FormLabel>
            <Field $w={65} $ml={5} readOnly value="4336" />
          </FormRow>
          <FormRow $mt={4}>
            <FormLabel $w={93}>Steuerschlüssel:</FormLabel>
            <Combo $w={377}>Umsatzsteuerfrei (Verkauf)<Updown /></Combo>
          </FormRow>
          <NoteText>
            abweichender Steuerschlüssel: Umsatzsteuerfrei (Verkauf); Steuerschlüssel:
            <br />
            10;
          </NoteText>
          <SubGroup $h={83} $mt={41}>
            <SubLegend $ml={9}>Auswertung Umsatzsteuer</SubLegend>
            <FormRow $mt={6} $pl={18}>
              <FormLabel $w={213}>Position Umsatzsteuer-Voranmeldung:</FormLabel>
              <Field $w={65} $right readOnly value="21" />
            </FormRow>
            <FormRow $mt={11} $pl={18}>
              <FormLabel $w={213}>Position Umsatzsteuererklärung:</FormLabel>
              <Field $w={65} $right readOnly value="721" />
            </FormRow>
          </SubGroup>
          <SubGroup $h={179} $mt={12}>
            <SubLegend $ml={9}>Auswertung Einnahmen-Überschussrechnung</SubLegend>
            <FormRow $mt={15} $pl={20}>
              <CheckBox />
              <span>Soll / Haben in EÜR getrennt</span>
            </FormRow>
            <FormRow $mt={19} $pl={19}>
              <FormLabel $w={261} $pt={1}>Position Einnahmen-Überschussrechnung (gesamt):</FormLabel>
              <Field $w={65} $right readOnly value="103" />
            </FormRow>
            <FormRow $mt={4} $pl={19}>
              <FormLabel $w={261} $pt={0}>Sachgebiet Einnahmen-Überschussrechnung:</FormLabel>
              <Field $w={65} $right readOnly value="2" />
            </FormRow>
          </SubGroup>
        </Group>
        <DialogFooter>
          <Btn k="F11" label="OK" w={101} primary center />
          <Btn k="F12" label="Abbrechen" w={103} on center />
        </DialogFooter>
      </Dialog>
    </Page>
  );
}
